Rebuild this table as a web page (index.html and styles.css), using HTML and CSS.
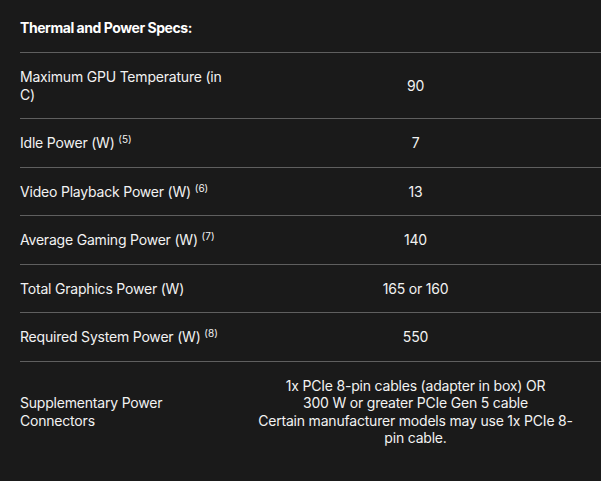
FILE: index.html
```html
<!DOCTYPE html>
<html>
<head>
<meta charset="utf-8">
<link rel="stylesheet" href="styles.css">
</head>
<body>
<div class="specs">
  <div class="title">Thermal and Power Specs:</div>
  <div class="row"><div class="label">Maximum GPU Temperature (in C)</div><div class="value">90</div></div>
  <div class="row"><div class="label">Idle Power (W) <sup>(5)</sup></div><div class="value">7</div></div>
  <div class="row"><div class="label">Video Playback Power (W) <sup>(6)</sup></div><div class="value">13</div></div>
  <div class="row"><div class="label">Average Gaming Power (W) <sup>(7)</sup></div><div class="value">140</div></div>
  <div class="row"><div class="label">Total Graphics Power (W)</div><div class="value">165 or 160</div></div>
  <div class="row"><div class="label">Required System Power (W) <sup>(8)</sup></div><div class="value">550</div></div>
  <div class="row"><div class="label">Supplementary Power Connectors</div><div class="value">1x PCIe 8-pin cables (adapter in box) OR<br>300 W or greater PCIe Gen 5 cable<br>Certain manufacturer models may use 1x PCIe 8-pin cable.</div></div>
</div>
</body>
</html>
```
FILE: styles.css
```css
html, body {
  margin: 0;
  padding: 0;
  background: #1a1a1a;
}
body {
  font-family: Inter, Roboto, "Liberation Sans", sans-serif;
  font-size: 14px;
  line-height: 17.5px;
  letter-spacing: -0.2px;
  color: #f2f2f2;
}
.specs {
  padding-left: 20px;
}
.title {
  font-weight: 700;
  letter-spacing: -0.45px;
  line-height: 18px;
  padding: 19px 0 15px;
  color: #fff;
}
.row {
  display: grid;
  grid-template-columns: 210px 1fr;
  align-items: center;
  border-top: 1px solid #5f5f5f;
}
.label {
  padding: 15px 0;
}
.value {
  padding: 15px 20px;
  text-align: center;
}
sup {
  font-size: 10px;
  line-height: 0;
  vertical-align: 5px;
  letter-spacing: 0;
}
```
